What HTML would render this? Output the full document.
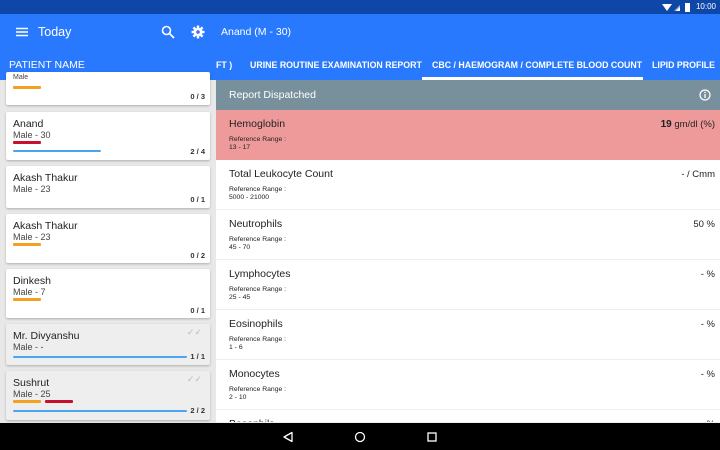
<!DOCTYPE html>
<html style="width:720px;height:450px;overflow:hidden"><head><meta charset="utf-8"><style>
*{margin:0;padding:0;box-sizing:border-box}
body{width:720px;height:450px;overflow:hidden;font-family:"Liberation Sans",sans-serif;background:#e8e8e8;position:relative}
.a{position:absolute}
.card{position:absolute;left:6px;width:204px;background:#fff;box-shadow:0 1px 2px rgba(0,0,0,.25);border-radius:2px}
.card.g{background:#eeeeee}
.nm{position:absolute;left:7px;font-size:10.5px;color:#222}
.sx{position:absolute;left:7px;font-size:9px;color:#444}
.bar{position:absolute;height:2.5px;border-radius:1px}
.cnt{position:absolute;right:5px;font-size:7.5px;color:#333;font-weight:bold}
.row{position:absolute;left:216px;width:504px;height:50px;background:#fff;border-bottom:1px solid #eee}
.row .t{position:absolute;left:13px;top:8px;font-size:10.5px;color:#222}
.row .r{position:absolute;left:13px;top:26px;font-size:6.8px;color:#222;line-height:8px}
.row .v{position:absolute;right:5px;top:9px;font-size:9.5px;color:#222}
</style></head><body>
<div class="a" style="left:0;top:0;width:720px;height:14px;background:#0f47a8"></div>
<div class="a" style="right:4px;top:2px;font-size:8px;color:#fff">10:00</div>
<svg class="a" style="left:662px;top:2px" width="34" height="10"><path d="M0 2 L10 2 L5 9Z" fill="#fff"/><path d="M12 9 L18 3 L18 9Z" fill="#9fb3d8"/><path d="M14 9 L18 5 L18 9Z" fill="#fff"/><rect x="23" y="1" width="5" height="9" fill="#fff"/></svg>
<div class="a" style="left:0;top:14px;width:720px;height:66px;background:#2979fe"></div>
<svg class="a" style="left:16px;top:27px" width="12" height="10"><path d="M0 1.5H12M0 5H12M0 8.5H12" stroke="#fff" stroke-width="1.6"/></svg>
<div class="a" style="left:38px;top:25px;font-size:12.5px;color:#fff">Today</div>
<svg class="a" style="left:161px;top:25px" width="14" height="14"><circle cx="5.5" cy="5.5" r="4" stroke="#fff" stroke-width="1.6" fill="none"/><path d="M8.5 8.5L13 13" stroke="#fff" stroke-width="1.8"/></svg>
<svg class="a" style="left:191px;top:25px" width="14" height="14" viewBox="0 0 14 14"><g fill="#fff"><circle cx="7" cy="7" r="4.5"/><rect x="5.8" y="0.5" width="2.4" height="13"/><rect x="0.5" y="5.8" width="13" height="2.4"/><rect x="5.8" y="0.5" width="2.4" height="13" transform="rotate(45 7 7)"/><rect x="5.8" y="0.5" width="2.4" height="13" transform="rotate(-45 7 7)"/></g><circle cx="7" cy="7" r="1.8" fill="#2979fe"/></svg>
<div class="a" style="left:221px;top:26px;font-size:10.5px;color:#fff">Anand (M - 30)</div>
<div class="a" style="left:9px;top:59px;font-size:10.5px;color:#fff">PATIENT NAME</div>
<div class="a" style="left:216px;top:60px;font-size:8.8px;color:#fff;font-weight:bold;white-space:nowrap">FT )</div>
<div class="a" style="left:250px;top:60px;font-size:8.8px;color:#fff;font-weight:bold;white-space:nowrap">URINE ROUTINE EXAMINATION REPORT</div>
<div class="a" style="left:432px;top:60px;font-size:8.8px;color:#fff;font-weight:bold;white-space:nowrap">CBC / HAEMOGRAM / COMPLETE BLOOD COUNT</div>
<div class="a" style="left:652px;top:60px;font-size:8.8px;color:#fff;font-weight:bold;white-space:nowrap">LIPID PROFILE</div>
<div class="a" style="left:422px;top:77px;width:221px;height:3px;background:#fff"></div>

<div class="card" style="top:72px;height:33px"><div class="sx" style="top:2px;font-size:7px">Male</div><div class="bar" style="left:7px;top:14px;width:28px;background:#f5a020"></div><div class="cnt" style="top:20px">0 / 3</div></div>
<div class="card" style="top:112px;height:48px"><div class="nm" style="top:6px">Anand</div><div class="sx" style="top:18px">Male - 30</div><div class="bar" style="left:7px;top:29px;width:28px;background:#c8102e"></div><div class="bar" style="left:7px;top:38px;width:88px;height:2px;background:#4aa5f0"></div><div class="cnt" style="top:35px">2 / 4</div></div>
<div class="card" style="top:166px;height:42px"><div class="nm" style="top:6px">Akash Thakur</div><div class="sx" style="top:18px">Male - 23</div><div class="cnt" style="top:29px">0 / 1</div></div>
<div class="card" style="top:214px;height:49px"><div class="nm" style="top:6px">Akash Thakur</div><div class="sx" style="top:18px">Male - 23</div><div class="bar" style="left:7px;top:29px;width:28px;background:#f5a020"></div><div class="cnt" style="top:37px">0 / 2</div></div>
<div class="card" style="top:269px;height:49px"><div class="nm" style="top:6px">Dinkesh</div><div class="sx" style="top:18px">Male - 7</div><div class="bar" style="left:7px;top:29px;width:28px;background:#f5a020"></div><div class="cnt" style="top:37px">0 / 1</div></div>
<div class="card g" style="top:324px;height:41px"><div class="nm" style="top:6px">Mr. Divyanshu</div><div class="sx" style="top:18px">Male - -</div><div class="a" style="right:8px;top:3px;font-size:9px;color:#bbb">✓✓</div><div class="bar" style="left:7px;top:32px;width:174px;height:2px;background:#4aa5f0"></div><div class="cnt" style="top:28px">1 / 1</div></div>
<div class="card g" style="top:371px;height:49px"><div class="nm" style="top:6px">Sushrut</div><div class="sx" style="top:18px">Male - 25</div><div class="a" style="right:8px;top:3px;font-size:9px;color:#bbb">✓✓</div><div class="bar" style="left:7px;top:29px;width:28px;background:#f5a020"></div><div class="bar" style="left:39px;top:29px;width:28px;background:#c8102e"></div><div class="bar" style="left:7px;top:39px;width:174px;height:2px;background:#4aa5f0"></div><div class="cnt" style="top:35px">2 / 2</div></div>

<div class="a" style="left:216px;top:80px;width:504px;height:30px;background:#78909c"></div>
<div class="a" style="left:229px;top:89px;font-size:10.5px;color:#fff">Report Dispatched</div>
<svg class="a" style="left:699px;top:89px" width="12" height="12"><circle cx="6" cy="6" r="5" stroke="#fff" stroke-width="1.2" fill="none"/><path d="M6 5V9" stroke="#fff" stroke-width="1.3"/><circle cx="6" cy="3.4" r=".8" fill="#fff"/></svg>

<div class="row" style="top:110px;background:#ef9a9a;border:none"><div class="t">Hemoglobin</div><div class="r">Reference Range :<br>13 - 17</div><div class="v"><b style="font-size:10px">19</b> gm/dl (%)</div></div>
<div class="row" style="top:160px"><div class="t">Total Leukocyte Count</div><div class="r">Reference Range :<br>5000 - 21000</div><div class="v">- / Cmm</div></div>
<div class="row" style="top:210px"><div class="t">Neutrophils</div><div class="r">Reference Range :<br>45 - 70</div><div class="v">50 %</div></div>
<div class="row" style="top:260px"><div class="t">Lymphocytes</div><div class="r">Reference Range :<br>25 - 45</div><div class="v">- %</div></div>
<div class="row" style="top:310px"><div class="t">Eosinophils</div><div class="r">Reference Range :<br>1 - 6</div><div class="v">- %</div></div>
<div class="row" style="top:360px"><div class="t">Monocytes</div><div class="r">Reference Range :<br>2 - 10</div><div class="v">- %</div></div>
<div class="row" style="top:410px;height:13px;overflow:hidden"><div class="t">Basophils</div><div class="v">- %</div></div>

<div class="a" style="left:0;top:423px;width:720px;height:27px;background:#000"></div>
<svg class="a" style="left:280px;top:429px" width="160" height="16"><path d="M4 8L12 3.5V12.5Z" stroke="#fff" stroke-width="1.3" fill="none" stroke-linejoin="round"/><circle cx="80" cy="8" r="4.5" stroke="#fff" stroke-width="1.3" fill="none"/><rect x="148" y="4" width="8" height="8" stroke="#fff" stroke-width="1.3" fill="none"/></svg>
</body></html>
